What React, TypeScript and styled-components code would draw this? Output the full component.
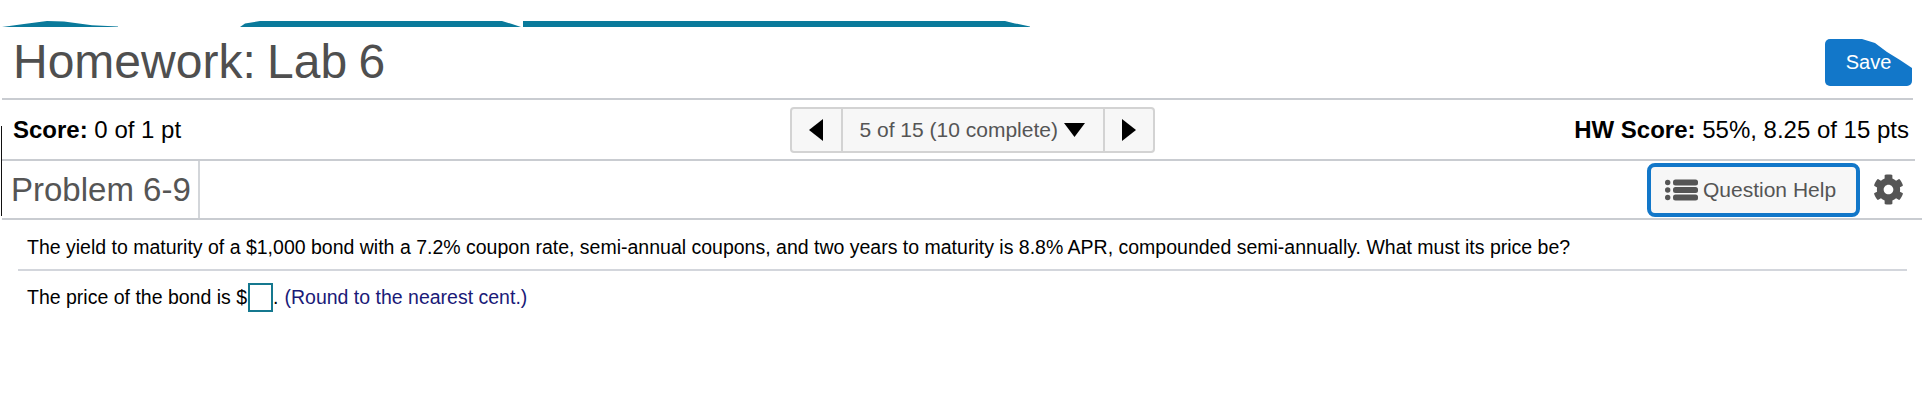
import React from "react";
import styled, { createGlobalStyle } from "styled-components";
import { FaCog } from "react-icons/fa";

const Global = createGlobalStyle`
  html, body { margin: 0; padding: 0; background: #fff; }
  body { font-family: "Liberation Sans", Arial, sans-serif; color: #000; overflow: hidden; }
`;

const Page = styled.div`
  position: relative;
  width: 1922px;
  height: 415px;
  padding-top: 21px;
  box-sizing: border-box;
`;

const EdgeLine = styled.div`
  position: absolute;
  left: 1px;
  top: 126px;
  width: 1px;
  height: 90px;
  background: #111;
`;

const Strip = styled.div`
  display: flex;
  height: 6px;
  padding-left: 2px;
`;

const StripPiece = styled.div<{ $w: number; $gap: number; $clip: string }>`
  width: ${(p) => p.$w}px;
  margin-right: ${(p) => p.$gap}px;
  background: #0a7a9b;
  clip-path: ${(p) => p.$clip};
`;

const Header = styled.header`
  display: flex;
  align-items: center;
  justify-content: space-between;
  box-sizing: border-box;
  width: 1911px;
  height: 73px;
  margin-left: 2px;
  border-bottom: 2px solid #c9ccd1;
`;

const Title = styled.h1`
  margin: 0 0 1px 11px;
  font-size: 48px;
  line-height: 54px;
  font-weight: 400;
  color: #4f4f4f;
  word-spacing: -2px;
`;

const SaveButton = styled.button`
  width: 87px;
  height: 47px;
  margin: 0 1px 0 0;
  padding: 0;
  border: 0;
  border-radius: 5px;
  background: #1277c9;
  color: #fff;
  font: 400 20px "Liberation Sans", Arial, sans-serif;
  clip-path: polygon(0 0, 37px 0, 50px 4px, 62px 13px, 75px 21px, 87px 29px, 87px 47px, 0 47px);
`;

const ScoreRow = styled.div`
  display: flex;
  align-items: center;
  justify-content: space-between;
  box-sizing: border-box;
  width: 1913px;
  height: 61px;
  margin-left: 2px;
  padding: 0 6px 0 11px;
  border-bottom: 2px solid #c9ccd1;
  font-size: 24px;
`;

const ScoreText = styled.div<{ $right?: boolean }>`
  flex: 1 1 0;
  text-align: ${(p) => (p.$right ? "right" : "left")};
  white-space: nowrap;
`;

const Pager = styled.div`
  display: flex;
  box-sizing: border-box;
  width: 365px;
  height: 46px;
  margin-left: 23px;
  border: 2px solid #d3d3d3;
  border-radius: 4px;
  background: #f7f7f7;
`;

const PagerArrow = styled.div`
  display: flex;
  align-items: center;
  justify-content: center;
  flex: 1 1 0;
`;

const PagerLabel = styled.div`
  display: flex;
  align-items: center;
  gap: 6px;
  box-sizing: border-box;
  width: 264px;
  padding-left: 17px;
  border-left: 2px solid #d3d3d3;
  border-right: 2px solid #d3d3d3;
  color: #555;
  font-size: 21px;
  white-space: nowrap;
`;

const ProblemRow = styled.div`
  display: flex;
  align-items: center;
  box-sizing: border-box;
  width: 1920px;
  height: 59px;
  margin-left: 2px;
  border-bottom: 2px solid #c9ccd1;
`;

const ProblemTitle = styled.h2`
  box-sizing: border-box;
  height: 100%;
  width: 198px;
  margin: 0;
  padding: 0 7px 0 9px;
  border-right: 2px solid #d3d6da;
  color: #555;
  font-size: 33px;
  font-weight: 400;
  line-height: 58px;
  white-space: nowrap;
`;

const HelpGroup = styled.div`
  display: flex;
  align-items: center;
  margin-left: auto;
  margin-right: 18px;
  gap: 13px;
`;

const HelpButton = styled.button`
  display: flex;
  align-items: center;
  gap: 5px;
  box-sizing: border-box;
  width: 213px;
  height: 54px;
  padding: 0 0 0 14px;
  border: 4px solid #1277c9;
  border-radius: 8px;
  background: #f7f7f7;
  color: #555;
  font: 400 21px "Liberation Sans", Arial, sans-serif;
  white-space: nowrap;
`;

const GearIcon = styled(FaCog)`
  width: 31px;
  height: 31px;
  color: #555;
`;

const Question = styled.section`
  margin-left: 18px;
  width: 1889px;
`;

const Prompt = styled.p`
  margin: 0;
  box-sizing: border-box;
  height: 51px;
  padding: 15px 0 0 9px;
  border-bottom: 2px solid #d3d6dc;
  font-size: 19.5px;
  line-height: 24px;
  white-space: nowrap;
`;

const Answer = styled.div`
  display: flex;
  align-items: center;
  height: 40px;
  padding-left: 9px;
  margin-top: 6px;
  font-size: 19.5px;
  white-space: nowrap;
`;

const AnswerBox = styled.span`
  box-sizing: border-box;
  width: 25px;
  height: 29px;
  margin-left: 1px;
  border: 2px solid #15788f;
`;

const Hint = styled.span`
  margin-left: 6px;
  color: #1a1a78;
`;

const Triangle = ({ points, w, h }: { points: string; w: number; h: number }) => (
  <svg width={w} height={h} viewBox={`0 0 ${w} ${h}`}>
    <polygon points={points} fill="#000" />
  </svg>
);

const ListIcon = () => (
  <svg width="33" height="22" viewBox="0 0 33 22">
    <g fill="#555">
      <circle cx="2.7" cy="3.5" r="2.7" />
      <circle cx="2.7" cy="11" r="2.7" />
      <circle cx="2.7" cy="18.5" r="2.7" />
      <rect x="8" y="0.5" width="25" height="6" rx="2.5" />
      <rect x="8" y="8" width="25" height="6" rx="2.5" />
      <rect x="8" y="15.5" width="25" height="6" rx="2.5" />
    </g>
  </svg>
);

export default function App() {
  return (
    <Page>
      <Global />
      <EdgeLine />
      <Strip>
        <StripPiece
          $w={116}
          $gap={122}
          $clip="polygon(0 100%, 22px 50%, 45px 0, 62px 10%, 90px 70%, 116px 90%, 116px 100%)"
        />
        <StripPiece
          $w={281}
          $gap={2}
          $clip="polygon(0 100%, 5px 40%, 20px 0, 262px 0, 272px 50%, 281px 100%)"
        />
        <StripPiece
          $w={507}
          $gap={0}
          $clip="polygon(0 0, 482px 0, 492px 40%, 507px 90%, 507px 100%, 0 100%)"
        />
      </Strip>
      <Header>
        <Title>Homework: Lab 6</Title>
        <SaveButton>Save</SaveButton>
      </Header>
      <ScoreRow>
        <ScoreText>
          <b>Score:</b> 0 of 1 pt
        </ScoreText>
        <Pager>
          <PagerArrow>
            <Triangle w={14} h={22} points="14,0 14,22 0,11" />
          </PagerArrow>
          <PagerLabel>
            5 of 15 (10 complete)
            <Triangle w={21} h={14} points="0,0 21,0 10.5,14" />
          </PagerLabel>
          <PagerArrow>
            <Triangle w={14} h={22} points="0,0 14,11 0,22" />
          </PagerArrow>
        </Pager>
        <ScoreText $right>
          <b>HW Score:</b> 55%, 8.25 of 15 pts
        </ScoreText>
      </ScoreRow>
      <ProblemRow>
        <ProblemTitle>Problem 6-9</ProblemTitle>
        <HelpGroup>
          <HelpButton>
            <ListIcon />
            Question Help
          </HelpButton>
          <GearIcon />
        </HelpGroup>
      </ProblemRow>
      <Question>
        <Prompt>
          The yield to maturity of a $1,000 bond with a 7.2% coupon rate, semi-annual coupons, and two years to
          maturity is 8.8% APR, compounded semi-annually. What must its price be?
        </Prompt>
        <Answer>
          The price of the bond is $<AnswerBox />.<Hint>(Round to the nearest cent.)</Hint>
        </Answer>
      </Question>
    </Page>
  );
}
